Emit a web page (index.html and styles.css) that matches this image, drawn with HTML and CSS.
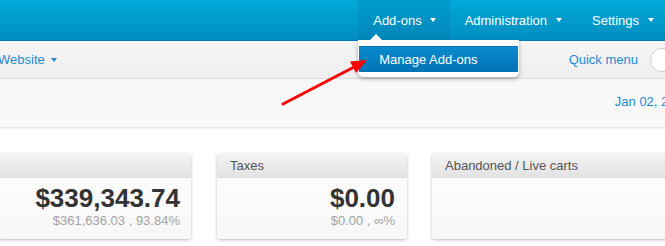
FILE: index.html
```html
<!DOCTYPE html>
<html>
<head>
<meta charset="utf-8">
<link rel="stylesheet" href="styles.css">
</head>
<body>
<div class="page">
  <header class="topbar">
    <nav class="mainnav">
      <div class="navitem active">
        <span>Add-ons</span><span class="caret"></span>
        <div class="dropdown">
          <div class="dd-item">Manage Add-ons</div>
        </div>
      </div>
      <div class="navitem"><span>Administration</span><span class="caret"></span></div>
      <div class="navitem"><span>Settings</span><span class="caret"></span></div>
    </nav>
  </header>
  <div class="subbar">
    <div class="storelink"><span>Website</span><span class="caret blue"></span></div>
    <div class="quick"><span>Quick menu</span><span class="toggle"></span></div>
  </div>
  <div class="toolbar">
    <span class="date">Jan 02, 2015</span>
  </div>
  <div class="cards">
    <div class="card c1">
      <div class="card-head">&nbsp;</div>
      <div class="card-body">
        <div class="big">$339,343.74</div>
        <div class="sub">$361,636.03 , 93.84%</div>
      </div>
    </div>
    <div class="card c2">
      <div class="card-head">Taxes</div>
      <div class="card-body">
        <div class="big">$0.00</div>
        <div class="sub">$0.00 , ∞%</div>
      </div>
    </div>
    <div class="card c3">
      <div class="card-head">Abandoned / Live carts</div>
      <div class="card-body"></div>
    </div>
  </div>
  <svg class="annot" width="665" height="246" viewBox="0 0 665 246">
    <line x1="283" y1="104" x2="356" y2="66" stroke="#f00" stroke-width="3" stroke-linecap="round"/>
    <polygon points="367,60 350,61.5 356,73" fill="#f00"/>
  </svg>
</div>
</body>
</html>
```

FILE: styles.css
```css
html, body {
  margin: 0;
  padding: 0;
  background: #fff;
}
.page {
  position: relative;
  width: 665px;
  height: 246px;
  overflow: hidden;
  font-family: "Liberation Sans", Arial, sans-serif;
  font-size: 13px;
}
.topbar {
  height: 40px;
  background: linear-gradient(#00aad8, #008dc1);
  border-bottom: 1px solid #0080b3;
  display: flex;
  justify-content: flex-end;
}
.mainnav {
  display: flex;
  margin-right: -4px;
}
.navitem {
  position: relative;
  display: flex;
  align-items: center;
  height: 40px;
  padding: 0 15px 0 15px;
  color: #fff;
  font-size: 13px;
}
.navitem.active {
  padding: 0 14px 0 15px;
  background: linear-gradient(#009cce, #0086ba);
}
.caret {
  display: inline-block;
  width: 0;
  height: 0;
  margin-left: 9px;
  border-left: 3.5px solid transparent;
  border-right: 3.5px solid transparent;
  border-top: 4px solid #fff;
}
.navitem.active .caret {
  margin-left: 8px;
}
.caret.blue {
  border-top-color: #1e8ad3;
  margin-left: 6px;
}
.dropdown {
  position: absolute;
  left: 0;
  top: 40px;
  width: 161px;
  height: 37px;
  box-sizing: border-box;
  padding-top: 6px;
  background: #fff;
  border-radius: 0 0 5px 5px;
  box-shadow: 0 2px 4px rgba(0,0,0,0.3);
  z-index: 5;
}
.dropdown::before {
  content: "";
  position: absolute;
  left: 12px;
  top: -6px;
  border-left: 6px solid transparent;
  border-right: 6px solid transparent;
  border-bottom: 6px solid #fff;
}
.dd-item {
  height: 26px;
  margin: 0 1px;
  padding-left: 20px;
  display: flex;
  align-items: center;
  color: #fff;
  background: linear-gradient(#0a8ace, #0073b6);
  border-top: 1px solid #0a6fae;
  box-sizing: border-box;
}
.subbar {
  height: 37px;
  background: linear-gradient(#f5f5f5, #efefef);
  border-bottom: 1px solid #dcdcdc;
  display: flex;
  align-items: center;
  justify-content: space-between;
  color: #1e8ad3;
}
.storelink {
  display: flex;
  align-items: center;
  margin-left: -2px;
}
.quick {
  display: flex;
  align-items: center;
  margin-right: -29px;
}
.toggle {
  display: inline-block;
  width: 42px;
  height: 22px;
  margin-left: 12px;
  border: 1px solid #cfcfcf;
  border-radius: 12px;
  background: #fff;
}
.toolbar {
  height: 48px;
  background: #f9f9f9;
  box-shadow: 0 1px 2px rgba(0,0,0,0.15);
  display: flex;
  align-items: center;
  justify-content: flex-end;
  position: relative;
  z-index: 1;
}
.date {
  color: #1e8ad3;
  margin-right: -25px;
  margin-bottom: 3px;
}
.cards {
  display: flex;
  align-items: flex-start;
  margin-top: 26px;
}
.card {
  box-sizing: border-box;
  height: 86px;
  border-radius: 3px;
  box-shadow: 0 1px 3px rgba(0,0,0,0.28);
  background: linear-gradient(#ffffff, #f7f7f7);
  overflow: hidden;
  flex: none;
}
.c1 { width: 193px; margin-left: -2px; }
.c2 { width: 190px; margin-left: 26px; }
.c3 { width: 260px; margin-left: 25px; }
.card-head {
  height: 24px;
  line-height: 25px;
  padding-left: 13px;
  color: #555;
  background: linear-gradient(#f3f3f3, #e3e3e3);
  border-bottom: 1px solid #dedede;
}
.card-body {
  padding: 5px 11px 0 0;
  text-align: right;
}
.c2 .card-body { padding-right: 12px; }
.big {
  font-size: 26px;
  font-weight: bold;
  line-height: 30px;
  color: #333;
}
.sub {
  font-size: 13px;
  line-height: 16px;
  color: #a3a3a3;
}
.annot {
  position: absolute;
  left: 0;
  top: 0;
  z-index: 10;
  pointer-events: none;
}
```
